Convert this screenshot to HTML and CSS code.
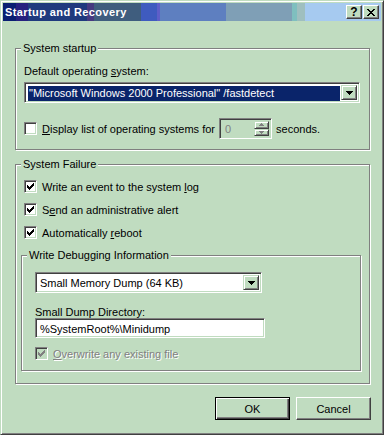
FILE: index.html
```html
<!DOCTYPE html>
<html lang="en">
<head>
  <meta charset="UTF-8">
  <title>Startup and Recovery</title>
  <link rel="stylesheet" href="styles.css">
</head>
<body>
  <div class="window">
    <div class="titlebar">
      <span class="title">Startup and Recovery</span>
      <div class="caption-buttons">
        <span class="cap-btn help">?</span>
        <span class="cap-btn">
          <svg width="8" height="7" viewBox="0 0 8 7" shape-rendering="crispEdges">
            <path d="M0 0h2v1h-2zM1 1h2v1h-2zM2 2h4v1h-4zM3 3h2v1h-2zM2 4h4v1h-4zM1 5h2v1h-2zM0 6h2v1h-2zM6 0h2v1h-2zM5 1h2v1h-2zM5 5h2v1h-2zM6 6h2v1h-2z" fill="#000"/>
          </svg>
        </span>
      </div>
    </div>

    <div class="content">
      <!-- System startup -->
      <div class="group g-startup">
        <span class="group-title">System startup</span>
        <div class="label">Default operating <u>s</u>ystem:</div>
        <div class="combo wide">
          <div class="combo-field"><span class="sel selected">"Microsoft Windows 2000 Professional" /fastdetect</span></div>
          <span class="combo-btn">
            <svg width="7" height="4" viewBox="0 0 7 4" shape-rendering="crispEdges"><path d="M0 0h7v1h-1v1h-1v1h-1v1h-1v-1h-1v-1h-1v-1h-1z" fill="#000"/></svg>
          </span>
        </div>
        <div class="check-row tall">
          <span class="checkbox"></span>
          <span><u>D</u>isplay list of operating systems for</span>
          <span class="spin">
            <span class="spin-value">0</span>
            <span class="spin-btns">
              <span class="spin-btn"><svg width="5" height="3" viewBox="0 0 5 3" shape-rendering="crispEdges"><path d="M2 0h1v1h1v1h1v1h-5v-1h1v-1h1z" fill="#808080"/></svg></span>
              <span class="spin-btn"><svg width="5" height="3" viewBox="0 0 5 3" shape-rendering="crispEdges"><path d="M0 0h5v1h-1v1h-1v1h-1v-1h-1v-1h-1z" fill="#808080"/></svg></span>
            </span>
          </span>
          <span class="after-spin">seconds.</span>
        </div>
      </div>

      <!-- System Failure -->
      <div class="group g-failure">
        <span class="group-title">System Failure</span>
        <div class="check-row">
          <span class="checkbox"><svg class="tick" width="7" height="7" viewBox="0 0 7 7" shape-rendering="crispEdges"><path d="M0 2h1v3h-1zM1 3h1v3h-1zM2 4h1v3h-1zM3 3h1v3h-1zM4 2h1v3h-1zM5 1h1v3h-1zM6 0h1v3h-1z" fill="#000"/></svg></span>
          <span>Write an event to the system <u>l</u>og</span>
        </div>
        <div class="check-row">
          <span class="checkbox"><svg class="tick" width="7" height="7" viewBox="0 0 7 7" shape-rendering="crispEdges"><path d="M0 2h1v3h-1zM1 3h1v3h-1zM2 4h1v3h-1zM3 3h1v3h-1zM4 2h1v3h-1zM5 1h1v3h-1zM6 0h1v3h-1z" fill="#000"/></svg></span>
          <span>S<u>e</u>nd an administrative alert</span>
        </div>
        <div class="check-row">
          <span class="checkbox"><svg class="tick" width="7" height="7" viewBox="0 0 7 7" shape-rendering="crispEdges"><path d="M0 2h1v3h-1zM1 3h1v3h-1zM2 4h1v3h-1zM3 3h1v3h-1zM4 2h1v3h-1zM5 1h1v3h-1zM6 0h1v3h-1z" fill="#000"/></svg></span>
          <span>Automatically <u>r</u>eboot</span>
        </div>

        <div class="group g-debug">
          <span class="group-title">Write Debugging Information</span>
          <div class="combo narrow">
            <div class="combo-field"><span class="sel">Small Memory Dump (64 KB)</span></div>
            <span class="combo-btn">
              <svg width="7" height="4" viewBox="0 0 7 4" shape-rendering="crispEdges"><path d="M0 0h7v1h-1v1h-1v1h-1v1h-1v-1h-1v-1h-1v-1h-1z" fill="#000"/></svg>
            </span>
          </div>
          <div class="label small">Small Dump Directory:</div>
          <div class="textbox">%SystemRoot%\Minidump</div>
          <div class="check-row disabled">
            <span class="checkbox"><svg class="tick" width="7" height="7" viewBox="0 0 7 7" shape-rendering="crispEdges"><path d="M0 2h1v3h-1zM1 3h1v3h-1zM2 4h1v3h-1zM3 3h1v3h-1zM4 2h1v3h-1zM5 1h1v3h-1zM6 0h1v3h-1z" fill="#808080"/></svg></span>
            <span><u>O</u>verwrite any existing file</span>
          </div>
        </div>
      </div>

      <div class="buttons">
        <span class="btn default">OK</span>
        <span class="btn">Cancel</span>
      </div>
    </div>
  </div>
</body>
</html>
```

FILE: styles.css
```css
body { margin: 0; background: #c0dcc0; color: #000; font-family: "Liberation Sans", Arial, sans-serif; font-size: 11px; }

.window {
  width: 384px;
  height: 435px;
  box-sizing: border-box;
  background: #c0dcc0;
  border: 1px solid;
  border-color: #c0dcc0 #404040 #404040 #c0dcc0;
  box-shadow: inset 1px 1px 0 #fff, inset -1px -1px 0 #808080;
  padding: 2px;
}

/* title bar, banded like a 256 colour gradient */
.titlebar {
  height: 18px;
  display: flex;
  align-items: center;
  justify-content: space-between;
  padding-left: 2px;
  background: linear-gradient(to right,
    #0a1f72 0, #0a1f72 13px,
    #26217f 13px, #26217f 25px,
    #1f3a7e 25px, #1f3a7e 84px,
    #463a80 84px, #463a80 91px,
    #3f5d7e 91px, #3f5d7e 138px,
    #3f5bbf 138px, #3f5bbf 154px,
    #5e5ec8 154px, #5e5ec8 157px,
    #5e7fc0 157px, #5e7fc0 223px,
    #7f9fb6 223px, #7f9fb6 289px,
    #7fbfbf 289px, #7fbfbf 294px,
    #9fbfbf 294px, #9fbfbf 302px,
    #a6caf0 302px);
}
.title { color: #fff; font-weight: bold; letter-spacing: 0.4px; }
.caption-buttons { display: flex; gap: 1px; margin-right: 2px; }
.cap-btn {
  width: 16px;
  height: 14px;
  box-sizing: border-box;
  display: flex;
  align-items: center;
  justify-content: center;
  background: #c0dcc0;
  border: 1px solid;
  border-color: #fff #404040 #404040 #fff;
  box-shadow: inset -1px -1px 0 #808080;
}
.cap-btn.help { font-weight: bold; font-size: 12px; line-height: 12px; }

.content { padding: 27px 0 0 12px; }

/* etched group boxes */
.group {
  position: relative;
  width: 355px;
  box-sizing: border-box;
  border: 1px solid #808080;
  box-shadow: inset 1px 1px 0 #fff, 1px 1px 0 #fff;
}
.group-title {
  position: absolute;
  top: -7px;
  left: 5px;
  padding: 0 2px;
  line-height: 13px;
  background: #c0dcc0;
}
.g-startup { padding: 16px 0 10px 8px; }
.g-failure { margin-top: 14px; padding: 13px 8px 12px 8px; }
.g-debug { width: 340px; margin: 14px 0 0 -3px; padding: 16px 0 8px 13px; }

.label { line-height: 13px; }
.label.small { line-height: 11px; margin-top: 14px; }

/* sunken controls */
.combo, .textbox, .checkbox, .spin {
  box-sizing: border-box;
  border: 1px solid;
  border-color: #808080 #fff #fff #808080;
  box-shadow: inset 1px 1px 0 #404040, inset -1px -1px 0 #c0dcc0;
  background: #fff;
}
.combo { display: flex; height: 21px; padding: 2px; margin-top: 4px; }
.combo.wide { width: 336px; }
.combo.narrow { width: 227px; margin-top: 0; }
.combo-field { flex: 1; padding: 1px; }
.sel { display: block; height: 15px; line-height: 15px; padding-left: 1px; }
.sel.selected { background: #0a246a; color: #fff; }
.combo-btn, .spin-btn {
  box-sizing: border-box;
  display: flex;
  align-items: center;
  justify-content: center;
  background: #c0dcc0;
  border: 1px solid;
  border-color: #c0dcc0 #404040 #404040 #c0dcc0;
  box-shadow: inset 1px 1px 0 #fff, inset -1px -1px 0 #808080;
}
.combo-btn { width: 16px; }

.textbox { width: 230px; height: 20px; padding: 2px 4px; line-height: 16px; }

.check-row { display: flex; align-items: center; height: 17px; }
.check-row + .check-row { margin-top: 6px; }
.check-row.tall { height: 21px; margin-top: 15px; }
.checkbox {
  width: 13px;
  height: 13px;
  flex: none;
  margin-right: 5px;
  display: flex;
  align-items: center;
  justify-content: center;
}
.check-row.disabled { margin-top: 7px; color: #808080; text-shadow: 1px 1px 0 #fff; }
.check-row.disabled .checkbox { background: #c0dcc0; }

.spin { display: flex; width: 53px; height: 21px; padding: 2px; margin-left: 4px; background: #c0dcc0; }
.spin-value { flex: 1; padding-left: 3px; line-height: 17px; color: #808080; }
.spin-btns { display: flex; flex-direction: column; width: 15px; }
.spin-btn { flex: 1; }
.after-spin { margin-left: 4px; }

.buttons { display: flex; justify-content: flex-end; gap: 6px; width: 356px; margin-top: 13px; }
.btn {
  width: 75px;
  height: 23px;
  box-sizing: border-box;
  display: flex;
  align-items: center;
  justify-content: center;
  border: 1px solid;
  border-color: #fff #404040 #404040 #fff;
  box-shadow: inset -1px -1px 0 #808080;
}
.btn.default {
  border-color: #000;
  box-shadow: inset 1px 1px 0 #fff, inset -1px -1px 0 #404040, inset -2px -2px 0 #808080;
}
```
